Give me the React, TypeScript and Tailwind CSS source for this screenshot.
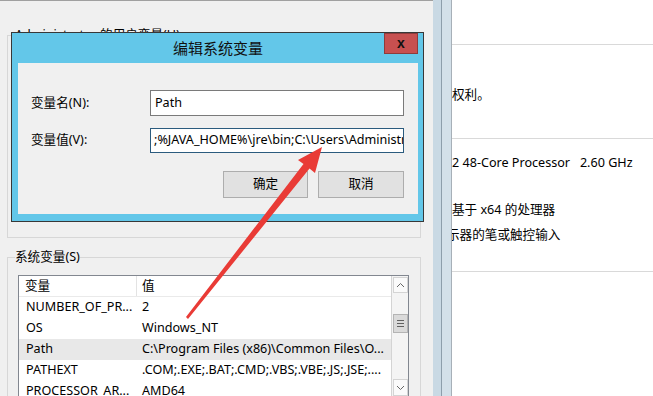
import React from 'react';

const ui = "font-['Noto_Sans','Noto_Sans_CJK_SC',sans-serif]";

const rows = [
  { name: 'NUMBER_OF_PR...', value: '2' },
  { name: 'OS', value: 'Windows_NT' },
  { name: 'Path', value: 'C:\\Program Files (x86)\\Common Files\\O...', selected: true },
  { name: 'PATHEXT', value: '.COM;.EXE;.BAT;.CMD;.VBS;.VBE;.JS;.JSE;....' },
  { name: 'PROCESSOR_AR...', value: 'AMD64' },
];

function Chevron({ down }: { down?: boolean }) {
  return (
    <svg width="9" height="6" viewBox="0 0 9 6" className={down ? 'rotate-180' : ''}>
      <path d="M1 5 L4.5 1.5 L8 5" fill="none" stroke="#666" strokeWidth="1" />
    </svg>
  );
}

function Scrollbar() {
  return (
    <div className="w-[17px] shrink-0 border-l border-[#d4d4d4] bg-[#f4f4f4] flex flex-col items-center">
      <div className="mt-px w-[15px] h-[16px] border border-[#d4d4d4] bg-[#fafafa] flex items-center justify-center">
        <Chevron />
      </div>
      <div className="mt-[21px] w-[15px] h-[19px] border border-[#b4b4b4] bg-[#dadada] flex flex-col items-center justify-center gap-[2px]">
        <div className="w-[7px] h-px bg-[#606060]" />
        <div className="w-[7px] h-px bg-[#606060]" />
        <div className="w-[7px] h-px bg-[#606060]" />
      </div>
      <div className="mt-[46px] w-[15px] h-[17px] border border-[#d4d4d4] bg-[#fafafa] flex items-center justify-center">
        <Chevron down />
      </div>
    </div>
  );
}

function EditDialog() {
  return (
    <div className="absolute left-[11px] top-[32px] w-[413px] h-[190px] border border-[#383838] bg-[#63c7e9] pl-[6px] pr-[5px] pb-[7px] flex flex-col">
      {/* 标题栏 */}
      <div className="h-[30px] shrink-0 grid grid-cols-[34px_1fr_34px]">
        <div />
        <div className="flex items-center justify-center text-[15px] text-[#111]">编辑系统变量</div>
        <div className="h-[21px] bg-[#c75050] border border-[#8e3b3b] flex items-center justify-center font-['Liberation_Sans',sans-serif] font-bold text-[14px] leading-none text-[#111] pb-[2px]">
          x
        </div>
      </div>

      <div className="flex-1 bg-[#f0f0f0] flex flex-col">
        <div className="mt-[27px] h-[26px] flex items-center">
          <div className="w-[132px] pl-[13px]">变量名(N):</div>
          <div className="w-[254px] h-full border border-[#7a7a7a] bg-white pl-[4px] flex items-center">Path</div>
        </div>
        <div className="mt-[12px] h-[25px] flex items-center">
          <div className="w-[132px] pl-[13px]">变量值(V):</div>
          <div className="w-[254px] h-full border border-[#2b5b7e] bg-white pl-[3px] flex items-center overflow-hidden whitespace-nowrap">
            <span>;%JAVA_HOME%\jre\bin;C:\Users</span>
            <span className="inline-block w-px h-[16px] bg-black" />
            <span>\Administrator\.dnx\bin</span>
          </div>
        </div>
        <div className="mt-[18px] pr-[14px] flex justify-end gap-[10px]">
          <button className="w-[85px] h-[27px] bg-[#e1e1e1] border border-[#adadad]">确定</button>
          <button className="w-[86px] h-[27px] bg-[#e1e1e1] border border-[#adadad]">取消</button>
        </div>
      </div>
    </div>
  );
}

export default function App() {
  return (
    <div className={`relative w-[653px] h-[396px] overflow-hidden flex bg-white text-[12.6px] text-black ${ui}`}>
      {/* 环境变量窗口 */}
      <div className="w-[433px] shrink-0 h-full bg-[#f0f0f0] border-t border-[#a0a0a0] flex flex-col">
        <fieldset className="mt-[27px] ml-[7px] w-[414px] h-[210px] shrink-0 border border-[#d7d7d7]">
          <legend className="ml-[7px] leading-[14px]">Administrator 的用户变量(U)</legend>
        </fieldset>

        <fieldset className="mt-[12px] ml-[7px] w-[414px] h-[170px] shrink-0 border border-[#d7d7d7]">
          <legend className="ml-[7px] leading-[14px]">系统变量(S)</legend>
          <div className="mt-[11px] ml-[10px] w-[391px] h-[140px] border border-[#828790] bg-white flex">
            <div className="flex-1 flex flex-col">
              <div className="h-[21px] shrink-0 flex border-b border-[#eaeaea]">
                <div className="w-[117px] pl-[6px] flex items-center">变量</div>
                <div className="w-px bg-[#e3e3e3]" />
                <div className="pl-[5px] flex items-center">值</div>
              </div>
              {rows.map((r) => (
                <div
                  key={r.name}
                  className={`h-[21px] shrink-0 flex items-center whitespace-nowrap ${r.selected ? 'bg-[#e8e8e8]' : ''}`}
                >
                  <div className="w-[118px] pl-[7px]">{r.name}</div>
                  <div className="pl-[5px]">{r.value}</div>
                </div>
              ))}
            </div>
            <Scrollbar />
          </div>
        </fieldset>
      </div>

      {/* 窗口边框 */}
      <div className="w-[8px] shrink-0 bg-[#c9d9e4]" />
      <div className="w-px shrink-0 bg-[#8d9eab]" />
      <div className="w-[9px] shrink-0 bg-[#d3e0e9]" />
      <div className="w-px shrink-0 bg-[#a7b0b8]" />

      {/* 系统信息 */}
      <div className="flex-1 overflow-hidden flex flex-col leading-[16px] whitespace-nowrap">
        <div className="h-[45px] shrink-0 border-b border-[#d9d9d9]" />
        <div className="h-[94px] shrink-0 border-b border-[#d9d9d9] pt-[42px]">权利。</div>
        <div className="h-[133px] shrink-0 border-b border-[#d9d9d9] pt-[16px] flex flex-col">
          <div className="whitespace-pre">2 48-Core Processor   2.60 GHz</div>
          <div className="mt-[31px]">基于 x64 的处理器</div>
          <div className="mt-[9px] -ml-[5px]">示器的笔或触控输入</div>
        </div>
      </div>

      <EditDialog />

      {/* 红色箭头 */}
      <svg className="absolute inset-0 pointer-events-none" width="653" height="396" viewBox="0 0 653 396">
        <polygon
          points="322,147 315,173 309.5,168.5 188,319 186,317 303.5,164 298,160"
          fill="#e93b36"
        />
      </svg>
    </div>
  );
}
